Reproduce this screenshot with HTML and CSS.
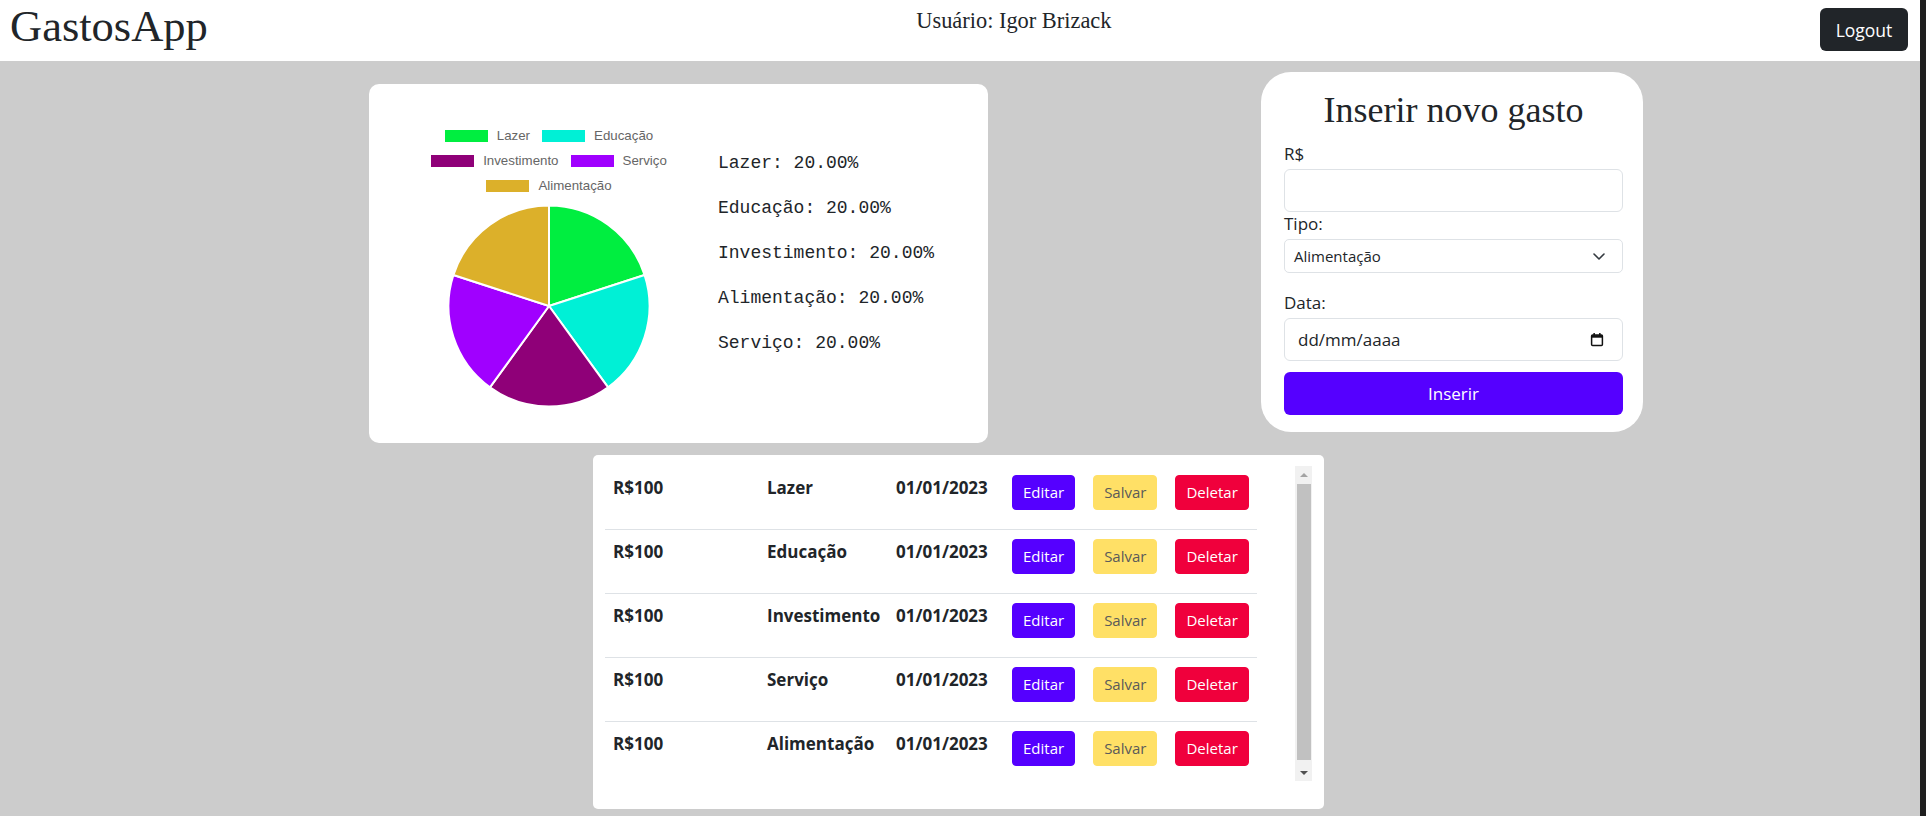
FILE: index.html
```html
<!DOCTYPE html>
<html lang="pt-BR">
<head>
<meta charset="utf-8">
<title>GastosApp</title>
<link rel="stylesheet" href="styles.css">
</head>
<body>
<header class="topbar">
  <h1 class="brand">GastosApp</h1>
  <span class="user">Usuário: Igor Brizack</span>
  <button class="btn-logout">Logout</button>
</header>

<main class="page">
  <section class="top-row">
    <div class="chart-card">
      <div class="chart-col">
        <div class="legend-row">
          <span class="legend-item"><i class="swatch c-lazer"></i>Lazer</span>
          <span class="legend-item"><i class="swatch c-educacao"></i>Educação</span>
        </div>
        <div class="legend-row">
          <span class="legend-item"><i class="swatch c-invest"></i>Investimento</span>
          <span class="legend-item"><i class="swatch c-servico"></i>Serviço</span>
        </div>
        <div class="legend-row">
          <span class="legend-item"><i class="swatch c-alim"></i>Alimentação</span>
        </div>
        <svg class="pie" width="204" height="204" viewBox="-102 -102 204 204">
          <g stroke="#ffffff" stroke-width="2" stroke-linejoin="round">
            <path fill="#00ee40" d="M0 0 L0 -100.5 A100.5 100.5 0 0 1 95.58 -31.06 Z"/>
            <path fill="#00f0d6" d="M0 0 L95.58 -31.06 A100.5 100.5 0 0 1 59.07 81.31 Z"/>
            <path fill="#8f0078" d="M0 0 L59.07 81.31 A100.5 100.5 0 0 1 -59.07 81.31 Z"/>
            <path fill="#a000ff" d="M0 0 L-59.07 81.31 A100.5 100.5 0 0 1 -95.58 -31.06 Z"/>
            <path fill="#dcb02a" d="M0 0 L-95.58 -31.06 A100.5 100.5 0 0 1 0 -100.5 Z"/>
          </g>
        </svg>
      </div>
      <div class="stats">
        <p>Lazer: 20.00%</p>
        <p>Educação: 20.00%</p>
        <p>Investimento: 20.00%</p>
        <p>Alimentação: 20.00%</p>
        <p>Serviço: 20.00%</p>
      </div>
    </div>

    <form class="form-card">
      <h2 class="form-title">Inserir novo gasto</h2>
      <label class="field-label" for="valor">R$</label>
      <input class="field-input" id="valor" type="text">
      <label class="field-label">Tipo:</label>
      <div class="field-select">
        <span>Alimentação</span>
        <svg width="12" height="7" viewBox="0 0 12 7"><polyline points="1,1 6,6 11,1" fill="none" stroke="#343a40" stroke-width="1.6" stroke-linecap="round" stroke-linejoin="round"/></svg>
      </div>
      <label class="field-label label-gap">Data:</label>
      <div class="field-date">
        <span>dd/mm/aaaa</span>
        <svg width="14" height="15" viewBox="0 0 14 15"><rect x="1.6" y="3.1" width="10.8" height="10.3" rx="1" fill="none" stroke="#111" stroke-width="1.5"/><rect x="1.6" y="3.1" width="10.8" height="2.6" fill="#111"/><rect x="3.4" y="1" width="1.5" height="2.6" fill="#111"/><rect x="9.1" y="1" width="1.5" height="2.6" fill="#111"/></svg>
      </div>
      <button type="button" class="btn-insert">Inserir</button>
    </form>
  </section>

  <section class="list-card">
    <div class="list-scroll">
      <div class="rows">
        <div class="row">
          <span class="cell c-val">R$100</span><span class="cell c-type">Lazer</span><span class="cell c-date">01/01/2023</span>
          <span class="actions"><button class="btn btn-edit">Editar</button><button class="btn btn-save">Salvar</button><button class="btn btn-del">Deletar</button></span>
        </div>
        <div class="row">
          <span class="cell c-val">R$100</span><span class="cell c-type">Educação</span><span class="cell c-date">01/01/2023</span>
          <span class="actions"><button class="btn btn-edit">Editar</button><button class="btn btn-save">Salvar</button><button class="btn btn-del">Deletar</button></span>
        </div>
        <div class="row">
          <span class="cell c-val">R$100</span><span class="cell c-type">Investimento</span><span class="cell c-date">01/01/2023</span>
          <span class="actions"><button class="btn btn-edit">Editar</button><button class="btn btn-save">Salvar</button><button class="btn btn-del">Deletar</button></span>
        </div>
        <div class="row">
          <span class="cell c-val">R$100</span><span class="cell c-type">Serviço</span><span class="cell c-date">01/01/2023</span>
          <span class="actions"><button class="btn btn-edit">Editar</button><button class="btn btn-save">Salvar</button><button class="btn btn-del">Deletar</button></span>
        </div>
        <div class="row">
          <span class="cell c-val">R$100</span><span class="cell c-type">Alimentação</span><span class="cell c-date">01/01/2023</span>
          <span class="actions"><button class="btn btn-edit">Editar</button><button class="btn btn-save">Salvar</button><button class="btn btn-del">Deletar</button></span>
        </div>
      </div>
      <div class="scrollbar">
        <div class="sb-btn"><i class="tri-up"></i></div>
        <div class="sb-thumb"></div>
        <div class="sb-btn"><i class="tri-down"></i></div>
      </div>
    </div>
  </section>
</main>
</body>
</html>
```

FILE: styles.css
```css
* { box-sizing: border-box; }

html, body { height: 100%; }

body {
  margin: 0;
  background: #cccccc;
  font-family: "Open Sans", "Noto Sans", sans-serif;
  color: #212529;
  border-right: 6px solid #1f1f1f;
}

/* Header */
.topbar {
  height: 61px;
  background: #ffffff;
  display: flex;
  justify-content: space-between;
  align-items: flex-start;
  padding: 0 12px 0 10px;
}

.brand {
  margin: 0;
  font-family: "Liberation Serif", serif;
  font-weight: normal;
  font-size: 44.5px;
  line-height: normal;
  color: #212529;
}

.user {
  margin-top: 8px;
  font-family: "Liberation Serif", serif;
  font-size: 22.4px;
  line-height: normal;
}

.btn-logout {
  margin-top: 8px;
  width: 88px;
  height: 43px;
  border: none;
  border-radius: 6px;
  background: #212529;
  color: #ffffff;
  font-family: "Open Sans", sans-serif;
  font-size: 17.5px;
  padding: 0;
}

/* Page */
.page {
  padding-top: 11px;
}

.top-row {
  display: flex;
  align-items: flex-start;
  padding-left: 369px;
  gap: 273px;
}

/* Chart card */
.chart-card {
  margin-top: 12px;
  width: 619px;
  height: 359px;
  background: #ffffff;
  border-radius: 10px;
  display: flex;
  align-items: flex-start;
  padding: 39px 0 0 30px;
  gap: 19px;
}

.chart-col {
  width: 300px;
  display: flex;
  flex-direction: column;
  align-items: center;
}

.legend-row {
  height: 25px;
  display: flex;
  align-items: center;
  justify-content: center;
  gap: 12px;
}

.legend-item {
  display: flex;
  align-items: center;
  gap: 9px;
  font-family: "Liberation Sans", Arial, sans-serif;
  font-size: 13.3px;
  color: #666666;
}

.swatch {
  display: block;
  width: 43px;
  height: 12px;
}

.c-lazer { background: #00ee40; }
.c-educacao { background: #00f0d6; }
.c-invest { background: #8f0078; }
.c-servico { background: #a000ff; }
.c-alim { background: #dcb02a; }

.pie {
  display: block;
  margin-top: 6px;
}

.stats {
  margin-top: 27px;
  font-family: "Liberation Mono", "Courier New", monospace;
  font-size: 18px;
  color: #212529;
}

.stats p {
  margin: 0 0 18px;
  line-height: 27px;
  white-space: nowrap;
}

/* Form card */
.form-card {
  width: 382px;
  background: #ffffff;
  border-radius: 30px;
  padding: 18px 20px 17px 23px;
  display: flex;
  flex-direction: column;
}

.form-title {
  margin: 0 0 11px;
  font-family: "Liberation Serif", serif;
  font-weight: normal;
  font-size: 36px;
  line-height: 41px;
  text-align: center;
  color: #212529;
}

.field-label {
  display: block;
  font-size: 17px;
  line-height: 24px;
  margin-bottom: 3px;
}

.label-gap { margin-top: 18px; }

.field-input {
  height: 43px;
  width: 100%;
  border: 1px solid #dee2e6;
  border-radius: 6px;
  font-family: inherit;
  font-size: 17px;
  padding: 0 14px;
}

.field-select {
  height: 34px;
  border: 1px solid #dee2e6;
  border-radius: 5px;
  display: flex;
  align-items: center;
  justify-content: space-between;
  padding: 0 17px 0 9px;
  font-size: 15px;
  color: #212529;
}

.field-date {
  height: 43px;
  border: 1px solid #dee2e6;
  border-radius: 6px;
  display: flex;
  align-items: center;
  justify-content: space-between;
  padding: 0 18px 0 13px;
  font-size: 17px;
  color: #212529;
}

.btn-insert {
  margin-top: 11px;
  height: 43px;
  border: none;
  border-radius: 6px;
  background: #5500ff;
  color: #ffffff;
  font-family: inherit;
  font-size: 17px;
}

/* List card */
.list-card {
  width: 731px;
  margin: 12px 0 0 593px;
  background: #ffffff;
  border-radius: 5px;
  padding: 11px 12px 28px 12px;
}

.list-scroll {
  height: 315px;
  display: flex;
  justify-content: space-between;
}

.rows {
  width: 652px;
  height: 315px;
  overflow: hidden;
}

.row {
  height: 64px;
  display: flex;
  align-items: flex-start;
  padding-top: 8px;
  border-bottom: 1px solid #dee2e6;
}

.cell {
  padding-left: 8px;
  font-size: 17px;
  font-weight: 700;
  line-height: 27px;
  white-space: nowrap;
}

.c-val { width: 154px; }
.c-type { width: 129px; }
.c-date { width: 116px; }

.actions {
  display: flex;
  gap: 18px;
  padding-left: 8px;
  margin-top: 1px;
}

.btn {
  height: 35px;
  padding: 0 10px;
  border: 1px solid transparent;
  border-radius: 4px;
  font-family: inherit;
  font-size: 15px;
  line-height: 1;
}

.btn-edit { background: #5500ff; border-color: #5500ff; color: #ffffff; }
.btn-save { background: #ffe066; border-color: #ffe066; color: #5a5a5a; }
.btn-del { background: #f0003c; border-color: #f0003c; color: #ffffff; }

/* Fake scrollbar */
.scrollbar {
  width: 17px;
  height: 315px;
  background: #f1f1f1;
  display: flex;
  flex-direction: column;
}

.sb-btn {
  height: 17px;
  display: flex;
  align-items: center;
  justify-content: center;
}

.sb-thumb {
  flex: 1;
  margin: 1px 1px 4px 2px;
  background: #c1c1c1;
}

.tri-up {
  width: 0;
  height: 0;
  border-left: 4px solid transparent;
  border-right: 4px solid transparent;
  border-bottom: 4px solid #a3a3a3;
}

.tri-down {
  width: 0;
  height: 0;
  border-left: 4px solid transparent;
  border-right: 4px solid transparent;
  border-top: 4px solid #505050;
}
```
